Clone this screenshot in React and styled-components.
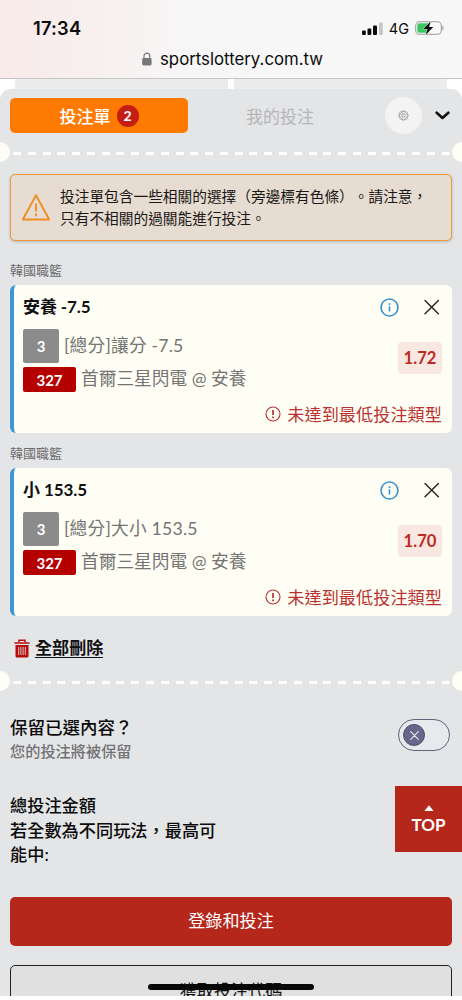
import React, { useState } from 'react'
import styled, { createGlobalStyle } from "styled-components"

const GlobalStyle = createGlobalStyle`
    *{
        box-sizing: border-box;
    }
    body{
        margin: 0;
        background-color: #fff;
        font-family: Lato, "Noto Sans CJK TC", sans-serif;
        color: #111;
        text-spacing-trim: space-all;
    }
    button{
        font-family: inherit;
        border: none;
        padding: 0;
        background: none;
    }
    svg{
        display: block;
        flex: none;
    }
`

const Page = styled.div`
    position: relative;
    width: 462px;
    height: 1000px;
    overflow: hidden;
    background-color: #fff;
`

const BrowserHeader = styled.header`
    height: 79px;
    padding-top: 14px;
    background: linear-gradient(90deg, #f8eae9 0, #f7eeed 70px, #f7f5f5 170px, #f7f7f7 250px);
    border-bottom: 1px solid #c6c5c5;
    font-family: Inter, sans-serif;
    color: #0b0b0b;
`
const StatusBar = styled.div`
    height: 28px;
    padding: 0 18px 0 33px;
    display: flex;
    align-items: center;
    justify-content: space-between;
`
const Time = styled.span`
    font-size: 18.3px;
    font-weight: 600;
    letter-spacing: 0.2px;
`
const Signals = styled.div`
    display: flex;
    align-items: center;
    font-size: 14.5px;
    gap: 6px;
`
const Address = styled.div`
    height: 33px;
    padding-left: 142px;
    display: flex;
    align-items: center;
    gap: 8px;
    font-size: 16.8px;
    white-space: nowrap;
`

const BehindTabs = styled.div`
    height: 20px;
    margin-bottom: -10px;
    padding: 0 15px;
    display: grid;
    grid-template-columns: 1fr 1fr;
    gap: 6px;
`
const BehindTab = styled.div`
    background-color: #ececec;
`

const Panel = styled.main`
    position: relative;
    height: 907px;
    overflow: hidden;
    background-color: #e4e5e7;
    border-radius: 11px 11px 0 0;
`
const Tabs = styled.div`
    height: 53px;
    padding: 0 10px;
    display: flex;
    align-items: center;
`
const Tab = styled.button`
    width: ${props => (props.$active ? "178px" : "184px")};
    height: 35px;
    border-radius: 5px;
    background-color: ${props => (props.$active ? "#ff7a00" : "transparent")};
    color: ${props => (props.$active ? "#fff" : "#b5b6b8")};
    font-size: 17px;
    font-weight: ${props => (props.$active ? "500" : "400")};

    display: flex;
    align-items: center;
    justify-content: center;
    gap: 6px;
`
const Count = styled.span`
    width: 22px;
    height: 22px;
    border-radius: 50%;
    background-color: #c41d14;
    font-size: 14px;
    font-weight: 700;
    line-height: 22px;
`
const Settings = styled.button`
    width: 37px;
    height: 37px;
    margin: 0 13px;
    border-radius: 50%;
    background-color: #f3f3f4;
    display: flex;
    align-items: center;
    justify-content: center;
`

const Perforation = styled.div`
    height: 20px;
    display: flex;
    align-items: center;
    justify-content: space-between;

    &::before,
    &::after{
        content: "";
        width: 20px;
        height: 20px;
        border-radius: 50%;
        background-color: #fffef5;
    }
    &::before{
        margin-left: -10px;
    }
    &::after{
        margin-right: -10px;
    }
`
const Dashes = styled.div`
    width: 437px;
    height: 3px;
    margin-top: 2px;
    border-radius: 2px;
    background: repeating-linear-gradient(90deg, #fff 0, #fff 8px, transparent 8px, transparent 14.78px);
`

const Warning = styled.div`
    height: 67px;
    margin: 12px 10px 19px;
    padding: 0 0 1px 10px;
    border: 1.5px solid #ed9938;
    border-radius: 5px;
    background-color: #e6dcd1;
    box-shadow: 0 1px 3px rgba(0, 0, 0, 0.2);

    display: flex;
    align-items: center;
    gap: 9px;
`
const WarningText = styled.p`
    margin: 0;
    font-size: 14.7px;
    line-height: 22px;
    white-space: nowrap;
    color: #1c1815;
`

const League = styled.div`
    height: ${props => (props.$first ? "25px" : "35px")};
    padding: ${props => (props.$first ? "0" : "10px")} 10px 0;
    font-size: 13px;
    line-height: 21px;
    color: #6b6b6d;
`
const Card = styled.section`
    height: 148px;
    margin: 0 10px;
    padding: 9px 10px 0 9px;
    border-left: 4px solid #3d97d2;
    border-radius: 6px;
    background-color: #fffef5;
`
const CardHead = styled.div`
    height: 26px;
    display: flex;
    align-items: center;
    gap: 22px;
`
const Title = styled.h3`
    flex: 1;
    margin: 0;
    font-size: 17px;
    font-weight: 700;
    line-height: 26px;
    letter-spacing: -0.1px;
    color: #111;
`
const CardBody = styled.div`
    height: 79px;
    padding-top: 9px;
    display: flex;
    justify-content: space-between;
    align-items: flex-start;
`
const Lines = styled.div`
    display: flex;
    flex-direction: column;
    gap: 4px;
`
const Line = styled.div`
    height: ${props => (props.$tall ? "34px" : "25px")};
    display: flex;
    align-items: center;
    gap: 5px;
    font-size: 17.7px;
    letter-spacing: ${props => (props.$tall ? "0.2px" : "0")};
    white-space: nowrap;
    color: #747472;
`
const LineText = styled.span`
    height: 25px;
    line-height: 24px;
`
const Tag = styled.span`
    width: ${props => (props.$red ? "53px" : "36px")};
    height: 100%;
    border-radius: 2px;
    background-color: ${props => (props.$red ? "#b50000" : "#8b8b8b")};
    color: #fff;
    font-size: 15px;
    font-weight: 700;
    letter-spacing: 0;
    display: flex;
    align-items: center;
    justify-content: center;
`
const Odds = styled.span`
    width: 44px;
    height: 32px;
    margin-top: 13px;
    border-radius: 4px;
    background-color: #f9e7e1;
    color: #bc2a25;
    font-size: 16.6px;
    font-weight: 700;
    line-height: 32px;
    text-align: center;
`
const CardError = styled.div`
    height: 28px;
    display: flex;
    align-items: center;
    justify-content: flex-end;
    gap: 6px;
    font-size: 17.2px;
    color: #b93231;

    svg{
        margin-top: 2px;
    }
`

const DeleteAll = styled.button`
    height: 55px;
    padding: 9px 0 0 14px;
    display: flex;
    align-items: center;
    gap: 5px;

    span{
        font-size: 17.1px;
        font-weight: 700;
        line-height: 20px;
        height: 20px;
        color: #111;
        border-bottom: 1.5px solid #111;
    }
`
const KeepRow = styled.div`
    height: 101px;
    padding: 25px 12px 0 10px;
    display: flex;
    justify-content: space-between;
`
const Strong = styled.div`
    font-size: ${props => props.$size || "17.2px"};
    font-weight: 500;
    line-height: 24.7px;
    color: #0a0a0a;
`
const Hint = styled.div`
    font-size: 15.2px;
    line-height: 21px;
    font-weight: 500;
    color: #707274;
`
const Toggle = styled.button`
    width: 52px;
    height: 32px;
    margin-top: 3px;
    padding-left: 4px;
    border: 1px solid #65637c;
    border-radius: 16px;
    background-color: #e8e9ec;
    display: flex;
    align-items: center;
`
const Knob = styled.span`
    width: 22px;
    height: 22px;
    border-radius: 50%;
    background-color: #68668a;
    border: 1px solid #504f6c;
    display: flex;
    align-items: center;
    justify-content: center;
`
const Total = styled.div`
    height: 105px;
    width: 232px;
    padding: 2px 10px 0;
`
const Action = styled.button`
    width: 442px;
    height: ${props => (props.$primary ? "49px" : "51px")};
    margin: 0 10px ${props => (props.$primary ? "19px" : "0")};
    border: ${props => (props.$primary ? "none" : "1px solid #222")};
    border-radius: 5px;
    background-color: ${props => (props.$primary ? "#b5261b" : "#e0e0e0")};
    color: ${props => (props.$primary ? "#fff" : "#111")};
    font-size: 17.1px;
    line-height: 24px;
    padding: ${props => (props.$primary ? "0 0 1px" : "1px 0 0")};
    display: block;
`
const TopButton = styled.button`
    position: absolute;
    right: 0;
    top: 786px;
    width: 67px;
    height: 66px;
    background-color: #b5261b;
    color: #fff;
    font-size: 17px;
    font-weight: 700;
    line-height: 22px;

    display: flex;
    flex-direction: column;
    align-items: center;
    padding-top: 19px;
    gap: 3px;
`
const HomeBar = styled.div`
    position: absolute;
    left: 148px;
    top: 984px;
    width: 166px;
    height: 6px;
    border-radius: 3px;
    background-color: #080808;
`

const bets = [
    { title: "安養 -7.5", market: "[總分]讓分 -7.5", odds: "1.72" },
    { title: "小 153.5", market: "[總分]大小 153.5", odds: "1.70" },
]

const CircleInfo = () => (
    <svg width="19" height="19" viewBox="0 0 19 19" fill="none" stroke="#3c92cf" strokeWidth="1.6">
        <circle cx="9.5" cy="9.5" r="8.5" />
        <path d="M9.5 8.2v5.4M9.5 5.2v1.8" />
    </svg>
)

const CircleAlert = () => (
    <svg width="16" height="16" viewBox="0 0 16 16" fill="none" stroke="#b93231" strokeWidth="1.1">
        <circle cx="8" cy="8" r="7" />
        <path d="M8 3.9v5M8 10.6v1.6" strokeWidth="1.7" />
    </svg>
)

const Bet = ({ bet, first }) => {
    return (
        <>
            <League $first={first}>韓國職籃</League>
            <Card>
                <CardHead>
                    <Title>{bet.title}</Title>
                    <CircleInfo />
                    <svg width="21" height="16" viewBox="0 0 21 16" fill="none" stroke="#222" strokeWidth="1.4" strokeLinecap="round">
                        <path d="M4 1.4l13.4 13.4M17.4 1.4L4 14.8" />
                    </svg>
                </CardHead>
                <CardBody>
                    <Lines>
                        <Line $tall><Tag>3</Tag><LineText>{bet.market}</LineText></Line>
                        <Line><Tag $red>327</Tag><LineText>首爾三星閃電 @ 安養</LineText></Line>
                    </Lines>
                    <Odds>{bet.odds}</Odds>
                </CardBody>
                <CardError><CircleAlert />未達到最低投注類型</CardError>
            </Card>
        </>
    )
}

const App = () => {
    const [tab, setTab] = useState("slip")

    return (
        <Page>
            <GlobalStyle />
            <BrowserHeader>
                <StatusBar>
                    <Time>17:34</Time>
                    <Signals>
                        <svg width="21" height="13" viewBox="0 0 21 13" fill="#0b0b0b">
                            <rect x="0" y="8.5" width="3.8" height="4.5" rx="1" />
                            <rect x="5.5" y="6.5" width="3.8" height="6.5" rx="1" />
                            <rect x="11" y="3.5" width="4" height="9.5" rx="1" />
                            <rect x="17" y="0.5" width="3.8" height="12.5" rx="1" fill="#c6c6c6" />
                        </svg>
                        <span>4G</span>
                        <svg width="29" height="16" viewBox="0 0 29 16">
                            <rect x="0.7" y="1.7" width="25.6" height="12.6" rx="3.8" fill="#fafafa" stroke="#9d9d9d" strokeWidth="1.1" />
                            <rect x="2.3" y="3.3" width="12" height="9.4" rx="2" fill="#39c760" />
                            <path d="M27.4 5.6c1.6.7 1.6 4.1 0 4.8z" fill="#9d9d9d" />
                            <path d="M15.8 1.2L8.3 8.9h4.2l-2 6 7.8-8h-4.3z" fill="#0b0b0b" stroke="#f7f7f7" strokeWidth="0.8" paintOrder="stroke" />
                        </svg>
                    </Signals>
                </StatusBar>
                <Address>
                    <svg width="10" height="14" viewBox="0 0 10 14">
                        <rect x="0.2" y="6" width="9.4" height="7.5" rx="1.4" fill="#77777a" />
                        <path d="M2 6.5V4a2.9 2.9 0 0 1 5.8 0v2.5" fill="none" stroke="#77777a" strokeWidth="1.2" />
                    </svg>
                    sportslottery.com.tw
                </Address>
            </BrowserHeader>
            <BehindTabs>
                <BehindTab />
                <BehindTab />
            </BehindTabs>
            <Panel>
                <Tabs>
                    <Tab $active={tab === "slip"} onClick={() => setTab("slip")}>投注單<Count>2</Count></Tab>
                    <Tab $active={tab === "mine"} onClick={() => setTab("mine")}>我的投注</Tab>
                    <Settings>
                        <svg width="11" height="11" viewBox="0 0 24 24" fill="none" stroke="#8e8e90" strokeWidth="1.9">
                            <path d="M10 2h4l1 3 3-1.4 2.4 2.4L19 9l3 1v4l-3 1 1.4 3-2.4 2.4L15 19l-1 3h-4l-1-3-3 1.4L3.6 18 5 15l-3-1v-4l3-1-1.4-3L6 3.6 9 5z" />
                            <circle cx="12" cy="12" r="3.8" />
                        </svg>
                    </Settings>
                    <svg width="15" height="9" viewBox="0 0 15 9" fill="none" stroke="#111" strokeWidth="2.6" strokeLinecap="round" strokeLinejoin="round">
                        <path d="M1.7 1.7l5.8 5.3 5.8-5.3" />
                    </svg>
                </Tabs>
                <Perforation><Dashes /></Perforation>

                <Warning>
                    <svg width="30" height="28" viewBox="0 0 30 28" fill="none" stroke="#ef8d26" strokeWidth="1.9">
                        <path d="M15 2.2L28.2 26.5H1.8z" strokeLinejoin="round" />
                        <path d="M15 10.5v8M15 20.6v2.6" />
                    </svg>
                    <WarningText>
                        投注單包含一些相關的選擇（旁邊標有色條）。請注意，<br />
                        只有不相關的過關能進行投注。
                    </WarningText>
                </Warning>

                {bets.map((bet, i) => <Bet key={bet.title} bet={bet} first={i === 0} />)}

                <DeleteAll>
                    <svg width="16" height="19" viewBox="0 0 16 19">
                        <path d="M5 3V1.2h6V3M0.5 4h15" fill="none" stroke="#b50b0b" strokeWidth="1.5" />
                        <path d="M1.5 6h13v11a1.5 1.5 0 0 1-1.5 1.5H3A1.5 1.5 0 0 1 1.5 17z" fill="#b50b0b" />
                        <path d="M4.7 8v8M6.9 8v8M9.1 8v8M11.3 8v8" stroke="#e4dcdc" strokeWidth="0.9" />
                    </svg>
                    <span>全部刪除</span>
                </DeleteAll>
                <Perforation><Dashes /></Perforation>

                <KeepRow>
                    <div>
                        <Strong $size="17.5px">保留已選內容？</Strong>
                        <Hint>您的投注將被保留</Hint>
                    </div>
                    <Toggle>
                        <Knob>
                            <svg width="9" height="9" viewBox="0 0 9 9" fill="none" stroke="#e9e9f0" strokeWidth="1.1" strokeLinecap="round">
                                <path d="M0.7 0.7l7.6 7.6M8.3 0.7L0.7 8.3" />
                            </svg>
                        </Knob>
                    </Toggle>
                </KeepRow>
                <Total>
                    <Strong>總投注金額<br />若全數為不同玩法，最高可能中:</Strong>
                </Total>
                <Action $primary>登錄和投注</Action>
                <Action>獲取投注代碼</Action>
            </Panel>
            <TopButton>
                <svg width="10" height="6" viewBox="0 0 10 6" fill="#fff">
                    <path d="M5 0.3L9.6 6H0.4z" />
                </svg>
                TOP
            </TopButton>
            <HomeBar />
        </Page>
    )
}

export default App
